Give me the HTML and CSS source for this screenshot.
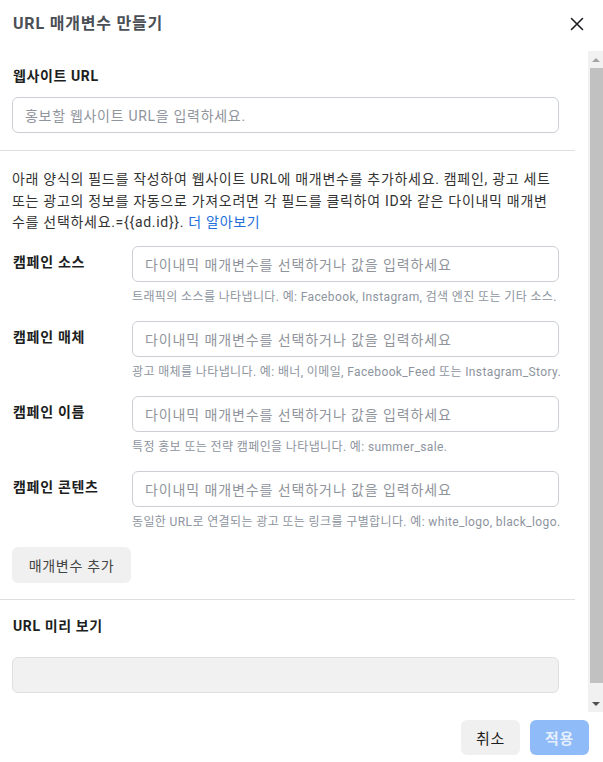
FILE: index.html
```html
<!DOCTYPE html>
<html lang="ko">
<head>
<meta charset="utf-8">
<link rel="stylesheet" href="styles.css">
</head>
<body>
<div class="dialog">
  <header class="header">
    <h1 class="title">URL 매개변수 만들기</h1>
    <button class="close" aria-label="닫기">
      <svg width="14" height="14" viewBox="0 0 14 14"><path d="M1.5 1.5 L12.5 12.5 M12.5 1.5 L1.5 12.5" stroke="#1c1e21" stroke-width="1.6" fill="none" stroke-linecap="round"/></svg>
    </button>
  </header>
  <div class="main">
    <div class="scroll">
      <section class="section first">
        <div class="label">웹사이트 URL</div>
        <div class="input"><span class="ph ph-url">홍보할 웹사이트 URL을 입력하세요.</span></div>
      </section>
      <section class="section params">
        <p class="desc">아래 양식의 필드를 작성하여 웹사이트 URL에 매개변수를 추가하세요. 캠페인, 광고 세트 또는 광고의 정보를 자동으로 가져오려면 각 필드를 클릭하여 ID와 같은 다이내믹 매개변수를 선택하세요.={{ad.id}}. <a class="link">더 알아보기</a></p>
        <div class="fields">
          <div class="field">
            <div class="flabel">캠페인 소스</div>
            <div class="fbody">
              <div class="input"><span class="ph">다이내믹 매개변수를 선택하거나 값을 입력하세요</span></div>
              <div class="help">트래픽의 소스를 나타냅니다. 예: Facebook, Instagram, 검색 엔진 또는 기타 소스.</div>
            </div>
          </div>
          <div class="field">
            <div class="flabel">캠페인 매체</div>
            <div class="fbody">
              <div class="input"><span class="ph">다이내믹 매개변수를 선택하거나 값을 입력하세요</span></div>
              <div class="help">광고 매체를 나타냅니다. 예: 배너, 이메일, Facebook_Feed 또는 Instagram_Story.</div>
            </div>
          </div>
          <div class="field">
            <div class="flabel">캠페인 이름</div>
            <div class="fbody">
              <div class="input"><span class="ph">다이내믹 매개변수를 선택하거나 값을 입력하세요</span></div>
              <div class="help">특정 홍보 또는 전략 캠페인을 나타냅니다. 예: summer_sale.</div>
            </div>
          </div>
          <div class="field">
            <div class="flabel">캠페인 콘텐츠</div>
            <div class="fbody">
              <div class="input"><span class="ph">다이내믹 매개변수를 선택하거나 값을 입력하세요</span></div>
              <div class="help">동일한 URL로 연결되는 광고 또는 링크를 구별합니다. 예: white_logo, black_logo.</div>
            </div>
          </div>
        </div>
        <button class="btn add">매개변수 추가</button>
      </section>
      <section class="section preview">
        <div class="label">URL 미리 보기</div>
        <div class="previewbox"></div>
      </section>
    </div>
    <div class="scrollbar">
      <div class="arrow up"></div>
      <div class="track"><div class="thumb"></div></div>
      <div class="arrow down"></div>
    </div>
  </div>
  <footer class="footer">
    <button class="btn cancel">취소</button>
    <button class="btn apply">적용</button>
  </footer>
</div>
</body>
</html>
```
FILE: styles.css
```css
* { box-sizing: border-box; }
html, body { margin: 0; padding: 0; background: #fff; }
body {
  font-family: Roboto, "Noto Sans CJK KR", sans-serif;
  color: #1c1e21;
  font-size: 14px;
}
.dialog {
  width: 603px;
  height: 762px;
  display: flex;
  flex-direction: column;
  overflow: hidden;
}
.header {
  height: 48px;
  flex: none;
  display: flex;
  align-items: center;
  justify-content: space-between;
  padding: 0 19px 0 13px;
}
.title {
  margin: 0;
  font-size: 16px;
  font-weight: 700;
  color: #4b4f56;
  line-height: 20px;
  letter-spacing: 0.8px;
}
.close {
  border: 0;
  background: none;
  padding: 0;
  width: 14px;
  height: 14px;
  display: flex;
}
.main {
  height: 664px;
  flex: none;
  display: flex;
}
.scroll {
  flex: 1;
  overflow: hidden;
  padding-right: 13px;
}
.section {
  padding: 0 16px 0 12px;
  border-bottom: 1px solid #dddfe2;
}
.section.first {
  padding-top: 18px;
  padding-bottom: 17px;
}
.label {
  font-weight: 700;
  font-size: 14px;
  line-height: 20px;
  color: #1c1e21;
  letter-spacing: 0.6px;
}
.first .label { margin-left: 1px; }
.input {
  height: 36px;
  border: 1px solid #ccd0d5;
  border-radius: 6px;
  display: flex;
  align-items: center;
  padding: 0 12px;
}
.first .input { margin-top: 11px; }
.ph {
  color: #90949c;
  font-size: 14px;
  white-space: nowrap;
  letter-spacing: 0.9px;
}
.ph.ph-url { letter-spacing: 0.7px; }
.params {
  padding-top: 18px;
  padding-bottom: 16px;
}
.desc {
  margin: 0;
  font-size: 14px;
  line-height: 21.5px;
  color: #333;
  letter-spacing: 0.7px;
}
.link { color: #216fdb; }
.fields {
  margin-top: 12px;
  display: flex;
  flex-direction: column;
  gap: 16px;
}
.field {
  display: flex;
}
.flabel {
  width: 120px;
  flex: none;
  font-weight: 700;
  line-height: 20px;
  padding-top: 6px;
  padding-left: 1px;
  letter-spacing: 0.7px;
}
.fbody { flex: 1; min-width: 0; }
.help {
  margin-top: 7px;
  font-size: 12px;
  line-height: 16px;
  color: #8d949e;
  white-space: nowrap;
  letter-spacing: 0.38px;
}
.btn {
  font-family: inherit;
  border: 0;
  border-radius: 6px;
  height: 36px;
  font-size: 14px;
  padding: 0;
  letter-spacing: 0.7px;
}
.add {
  margin-top: 17px;
  width: 119px;
  background: #f0f0f0;
  color: #444;
}
.preview {
  border-bottom: 0;
  padding-top: 16px;
}
.preview .label { font-weight: 700; margin-left: 1px; }
.previewbox {
  margin-top: 21px;
  height: 36px;
  background: #f1f1f1;
  border: 1px solid #dddfe2;
  border-radius: 6px;
}
.scrollbar {
  width: 15px;
  flex: none;
  background: #f1f1f1;
  display: flex;
  flex-direction: column;
  margin-top: 3px;
  height: 661px;
}
.arrow {
  height: 17px;
  flex: none;
  display: flex;
  align-items: center;
  justify-content: center;
}
.arrow::before {
  content: "";
  width: 0;
  height: 0;
  border-left: 4px solid transparent;
  border-right: 4px solid transparent;
}
.arrow.up::before { border-bottom: 4px solid #a3a3a3; }
.arrow.down::before { border-top: 4px solid #505050; }
.track {
  flex: 1;
  padding: 0 0 12px 2px;
}
.thumb {
  height: 100%;
  background: #c1c1c1;
}
.footer {
  flex: 1;
  display: flex;
  justify-content: flex-end;
  align-items: flex-start;
  gap: 10px;
  padding: 8px 14px 0 0;
}
.cancel {
  width: 59px;
  height: 35px;
  background: #f0f0f0;
  color: #1c1e21;
  font-size: 15px;
}
.apply {
  width: 59px;
  height: 35px;
  background: #8fbbf9;
  color: #e4eefd;
  font-weight: 700;
  font-size: 15px;
}
```
